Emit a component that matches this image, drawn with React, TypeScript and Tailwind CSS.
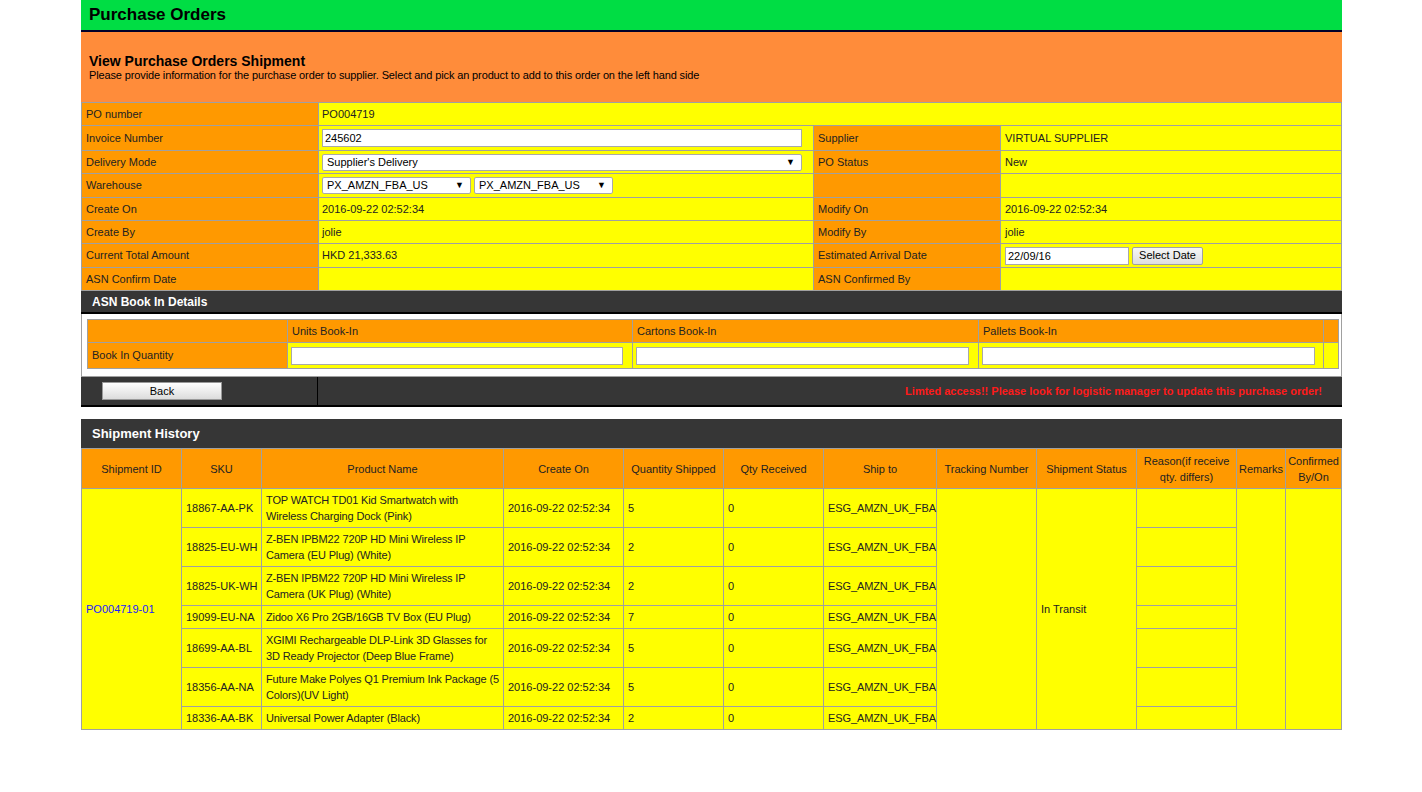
import React from "react";

const Lbl = ({ children, className = "" }: { children?: React.ReactNode; className?: string }) => (
  <div className={`bg-[#FF9900] pl-[4px] flex items-center ${className}`}>{children}</div>
);
const Val = ({ children, className = "" }: { children?: React.ReactNode; className?: string }) => (
  <div className={`bg-[#FFFF00] pl-[3px] flex items-center ${className}`}>{children}</div>
);

const Sel = ({ text, w }: { text: string; w: string }) => (
  <div className={`${w} h-[17px] bg-white border border-[#a9a9a9] rounded-[2px] flex items-center justify-between pl-[4px] pr-[6px] text-[11px] text-black`}>
    <span>{text}</span>
    <span className="text-[9px] leading-none">▼</span>
  </div>
);

const rows = [
  { sku: "18867-AA-PK", name: ["TOP WATCH TD01 Kid Smartwatch with", "Wireless Charging Dock (Pink)"], q: "5" },
  { sku: "18825-EU-WH", name: ["Z-BEN IPBM22 720P HD Mini Wireless IP", "Camera (EU Plug) (White)"], q: "2" },
  { sku: "18825-UK-WH", name: ["Z-BEN IPBM22 720P HD Mini Wireless IP", "Camera (UK Plug) (White)"], q: "2" },
  { sku: "19099-EU-NA", name: ["Zidoo X6 Pro 2GB/16GB TV Box (EU Plug)"], q: "7" },
  { sku: "18699-AA-BL", name: ["XGIMI Rechargeable DLP-Link 3D Glasses for", "3D Ready Projector (Deep Blue Frame)"], q: "5" },
  { sku: "18356-AA-NA", name: ["Future Make Polyes Q1 Premium Ink Package (5", "Colors)(UV Light)"], q: "5" },
  { sku: "18336-AA-BK", name: ["Universal Power Adapter (Black)"], q: "2" },
];

const headers = [
  "Shipment ID",
  "SKU",
  "Product Name",
  "Create On",
  "Quantity Shipped",
  "Qty Received",
  "Ship to",
  "Tracking Number",
  "Shipment Status",
  "Reason(if receive qty. differs)",
  "Remarks",
  "Confirmed By/On",
];

export default function App() {
  const Y = "bg-[#FFFF00] flex items-center pl-[4px] leading-[16px]";
  return (
    <div className="min-h-[792px] bg-white font-['Liberation_Sans',Arial,sans-serif] text-[11px] text-[#222]">
      <div className="ml-[81px] w-[1261px]">
        {/* Top header */}
        <div className="h-[30px] bg-[#00DD44] flex items-center pl-[8px] text-[17px] font-bold text-black">
          Purchase Orders
        </div>
        <div className="h-[2px] bg-[#00002a]" />
        <div className="h-[70px] bg-[#FF8C3A] pt-[21px] pl-[8px]">
          <div className="text-[14px] font-bold leading-[16px] text-black">View Purchase Orders Shipment</div>
          <div className="text-[11px] leading-[13px] text-black tracking-[-0.13px]">
            Please provide information for the purchase order to supplier. Select and pick an product to add to this order on the left hand side
          </div>
        </div>

        {/* Form grid */}
        <div className="grid grid-cols-[236px_494px_186px_340px] grid-rows-[22px_24px_22px_23px_22px_22px_23px_22px] gap-px bg-[#a0a0a0] p-px">
          <Lbl>PO number</Lbl>
          <Val className="col-span-3">PO004719</Val>

          <Lbl>Invoice Number</Lbl>
          <Val>
            <input
              readOnly
              defaultValue="245602"
              className="w-[480px] h-[18px] bg-white border border-[#a9a9a9] px-[2px] text-[11px] text-black outline-none"
            />
          </Val>
          <Lbl>Supplier</Lbl>
          <Val className="pl-[4px]">VIRTUAL SUPPLIER</Val>

          <Lbl>Delivery Mode</Lbl>
          <Val>
            <Sel text="Supplier's Delivery" w="w-[480px]" />
          </Val>
          <Lbl>PO Status</Lbl>
          <Val className="pl-[4px]">New</Val>

          <Lbl>Warehouse</Lbl>
          <Val className="gap-[3px]">
            <Sel text="PX_AMZN_FBA_US" w="w-[149px]" />
            <Sel text="PX_AMZN_FBA_US" w="w-[139px]" />
          </Val>
          <Lbl />
          <Val />

          <Lbl>Create On</Lbl>
          <Val>2016-09-22 02:52:34</Val>
          <Lbl>Modify On</Lbl>
          <Val className="pl-[4px]">2016-09-22 02:52:34</Val>

          <Lbl>Create By</Lbl>
          <Val>jolie</Val>
          <Lbl>Modify By</Lbl>
          <Val className="pl-[4px]">jolie</Val>

          <Lbl>Current Total Amount</Lbl>
          <Val>HKD 21,333.63</Val>
          <Lbl>Estimated Arrival Date</Lbl>
          <Val className="pl-[4px] gap-[3px]">
            <input
              readOnly
              defaultValue="22/09/16"
              className="w-[124px] h-[18px] bg-white border border-[#a9a9a9] px-[2px] text-[11px] text-black outline-none"
            />
            <button className="w-[71px] h-[18px] rounded-[2px] border border-[#a0a0a0] bg-gradient-to-b from-[#f6f6f6] to-[#dedede] text-[11px] text-black leading-none">
              Select Date
            </button>
          </Val>

          <Lbl>ASN Confirm Date</Lbl>
          <Val />
          <Lbl>ASN Confirmed By</Lbl>
          <Val />
        </div>

        {/* ASN Book In Details */}
        <div className="h-[23px] bg-[#363636] border-b-[2px] border-black flex items-center pl-[11px] text-[12px] font-bold text-white">
          ASN Book In Details
        </div>
        <div className="bg-white border-x border-b border-[#a0a0a0] pt-[5px] pb-[7px] pl-[5px] pr-[2px]">
          <div className="grid grid-cols-[199px_344px_345px_344px_14px] grid-rows-[22px_25px] gap-px bg-[#a0a0a0] p-px">
            <Lbl />
            <Lbl>Units Book-In</Lbl>
            <Lbl>Cartons Book-In</Lbl>
            <Lbl>Pallets Book-In</Lbl>
            <Lbl />
            <Lbl>Book In Quantity</Lbl>
            <Val className="pl-[3px]">
              <input readOnly className="w-[332px] h-[18px] bg-white border border-[#a9a9a9]" />
            </Val>
            <Val className="pl-[3px]">
              <input readOnly className="w-[333px] h-[18px] bg-white border border-[#a9a9a9]" />
            </Val>
            <Val className="pl-[3px]">
              <input readOnly className="w-[333px] h-[18px] bg-white border border-[#a9a9a9]" />
            </Val>
            <Val />
          </div>
        </div>
        <div className="h-[30px] bg-[#363636] border-b-[2px] border-black flex">
          <div className="w-[237px] border-r border-black flex items-center pl-[21px]">
            <button className="w-[120px] h-[18px] border border-[#999] bg-gradient-to-b from-[#ffffff] to-[#dcdcdc] text-[11px] text-black leading-none">
              Back
            </button>
          </div>
          <div className="flex-1 flex items-center justify-end pr-[20px] text-[11px] font-bold text-[#FF1A1A]">
            Limted access!! Please look for logistic manager to update this purchase order!
          </div>
        </div>

        {/* Shipment History */}
        <div className="mt-[12px] h-[29px] bg-[#363636] flex items-center pl-[11px] text-[13px] font-bold text-white">
          Shipment History
        </div>
        <div className="grid grid-cols-[99px_79px_241px_119px_99px_99px_112px_99px_99px_99px_48px_55px] grid-rows-[39px_38px_38px_38px_22px_38px_38px_22px] gap-px bg-[#a0a0a0] p-px">
          {headers.map((h) => (
            <div key={h} className="bg-[#FF9900] flex items-center justify-center text-center leading-[16px] px-[1px]">
              {h}
            </div>
          ))}
          {rows.map((r, i) => (
            <React.Fragment key={r.sku}>
              {i === 0 && (
                <div className={`${Y} row-span-7 text-[#1a1aff]`}>PO004719-01</div>
              )}
              <div className={Y}>{r.sku}</div>
              <div className={`${Y} whitespace-nowrap tracking-[-0.14px]`}>
                <div>
                  {r.name.map((l, k) => (
                    <div key={k}>{l}</div>
                  ))}
                </div>
              </div>
              <div className={Y}>2016-09-22 02:52:34</div>
              <div className={Y}>{r.q}</div>
              <div className={Y}>0</div>
              <div className={`${Y} whitespace-nowrap tracking-[-0.1px]`}>ESG_AMZN_UK_FBA</div>
              {i === 0 && (
                <>
                  <div className={`${Y} row-span-7`} />
                  <div className={`${Y} row-span-7`}>In Transit</div>
                </>
              )}
              <div className={Y} />
              {i === 0 && (
                <>
                  <div className={`${Y} row-span-7`} />
                  <div className={`${Y} row-span-7`} />
                </>
              )}
            </React.Fragment>
          ))}
        </div>
      </div>
    </div>
  );
}
